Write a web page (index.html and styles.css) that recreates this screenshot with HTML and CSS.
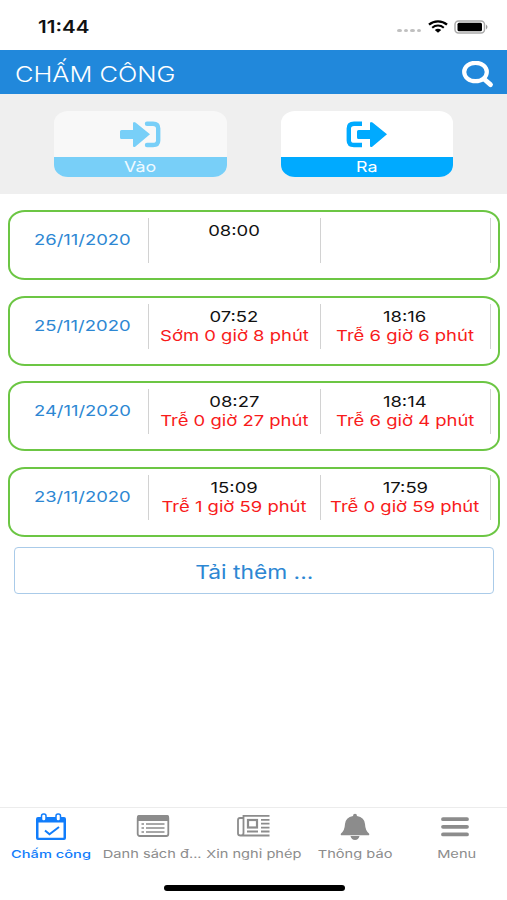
FILE: index.html
```html
<!DOCTYPE html>
<html lang="vi">
<head>
  <meta charset="UTF-8">
  <meta name="viewport" content="width=device-width, initial-scale=1.0">
  <title>Chấm công</title>
  <link rel="stylesheet" href="styles.css">
</head>
<body>

  <div class="status-bar">
    <span class="clock"><span class="wide">11:44</span></span>
    <div class="status-icons">
      <div class="dots"><i></i><i></i><i></i><i></i></div>
      <svg class="wifi" width="20" height="13" viewBox="0 0 20 13">
        <path d="M1 4.6C6 .2 14 .2 19 4.6" fill="none" stroke="#000" stroke-width="2.3"/>
        <path d="M4.2 7.7C7.5 4.8 12.5 4.8 15.8 7.7" fill="none" stroke="#000" stroke-width="2.1"/>
        <path d="M6.8 10Q10 7.4 13.2 10L10 12.8Z" fill="#000"/>
      </svg>
      <svg class="battery" width="35" height="14" viewBox="0 0 35 14">
        <rect x="1" y="1" width="29.5" height="12" rx="3.5" fill="#fff" stroke="#aaa" stroke-width="1.5"/>
        <rect x="3.5" y="2.7" width="24.5" height="8.6" rx="1.5" fill="#000"/>
        <path d="M32 4.5Q35 7 32 9.5Z" fill="#999"/>
      </svg>
    </div>
  </div>

  <header class="header">
    <h1><span class="wide">CHẤM CÔNG</span></h1>
    <svg width="32" height="27" viewBox="0 0 32 27" fill="none" stroke="#fff">
      <ellipse cx="13.5" cy="11" rx="11.3" ry="9.2" stroke-width="4.2"/>
      <path d="M22 18L28.5 23.6" stroke-width="4.8" stroke-linecap="round"/>
    </svg>
  </header>

  <div class="actions">
    <div class="action disabled">
      <div class="action-icon">
        <svg width="42" height="27" viewBox="0 0 42 27">
          <path d="M2.5 9H14V2.5Q14 0 16.5 1.5L31 13.3L16.500 25.5Q14 27 14 24.5V18H2.5Q1 18 1 16.5V10.5Q1 9 2.5 9Z" fill="currentColor"/>
          <path d="M28 2.8H34Q39.2 2.8 39.2 7.5V19.5Q39.2 24 34 24H28" fill="none" stroke="currentColor" stroke-width="4.4" stroke-linecap="round"/>
        </svg>
      </div>
      <div class="action-label"><span class="wide">Vào</span></div>
    </div>
    <div class="action">
      <div class="action-icon">
        <svg width="42" height="27" viewBox="0 0 42 27">
          <path d="M12.5 9H24V2.5Q24 0 26.5 1.5L41 13.3L26.5 25.5Q24 27 24 24.5V18H12.5Q11 18 11 16.5V10.5Q11 9 12.5 9Z" fill="currentColor"/>
          <path d="M16 2.8H8Q2.8 2.8 2.8 7.5V19.5Q2.8 24 8 24H16" fill="none" stroke="currentColor" stroke-width="4.4"/>
        </svg>
      </div>
      <div class="action-label"><span class="wide">Ra</span></div>
    </div>
  </div>

  <main class="list">
    <div class="card">
      <div class="date"><span class="wide">26/11/2020</span></div>
      <div class="time"><span class="wide">08:00</span></div>
      <div class="time"></div>
    </div>
    <div class="card">
      <div class="date"><span class="wide">25/11/2020</span></div>
      <div class="time"><span class="wide">07:52</span><span class="wide late">Sớm 0 giờ 8 phút</span></div>
      <div class="time"><span class="wide">18:16</span><span class="wide late">Trễ 6 giờ 6 phút</span></div>
    </div>
    <div class="card">
      <div class="date"><span class="wide">24/11/2020</span></div>
      <div class="time"><span class="wide">08:27</span><span class="wide late">Trễ 0 giờ 27 phút</span></div>
      <div class="time"><span class="wide">18:14</span><span class="wide late">Trễ 6 giờ 4 phút</span></div>
    </div>
    <div class="card">
      <div class="date"><span class="wide">23/11/2020</span></div>
      <div class="time"><span class="wide">15:09</span><span class="wide late">Trễ 1 giờ 59 phút</span></div>
      <div class="time"><span class="wide">17:59</span><span class="wide late">Trễ 0 giờ 59 phút</span></div>
    </div>
  </main>

  <button class="load-more" type="button"><span class="wide">Tải thêm ...</span></button>

  <nav class="tabs">
    <div class="tab active">
      <svg width="34" height="28" viewBox="0 0 34 28">
        <path d="M4 4H30Q32 4 32 6V25Q32 27 30 27H4Q2 27 2 25V6Q2 4 4 4ZM4.5 9.5V24.7H29.5V9.5Z" fill="currentColor" fill-rule="evenodd"/>
        <rect x="7.5" y="1" width="4.500" height="7" rx="2" fill="#fff" stroke="currentColor" stroke-width="1.5"/>
        <rect x="22" y="1" width="4.5" height="7" rx="2" fill="#fff" stroke="currentColor" stroke-width="1.5"/>
        <path d="M11 17.5L15.5 21.3L25 14" fill="none" stroke="currentColor" stroke-width="2"/>
      </svg>
      <span class="wide">Chấm công</span>
    </div>
    <div class="tab">
      <svg width="36" height="28" viewBox="0 0 36 28">
        <rect x="3.7" y="3" width="30.6" height="20" rx="2" fill="none" stroke="currentColor" stroke-width="1.8"/>
        <path d="M3 8V4Q3 2 5 2H33Q35 2 35 4V8Z" fill="currentColor"/>
        <path d="M7.5 11H10M7.500 15H10M7.5 19H10M12 11H30.5M12 15H30.5M12 19H30.5" stroke="currentColor" stroke-width="1.7"/>
      </svg>
      <span class="wide">Danh sách đ...</span>
    </div>
    <div class="tab">
      <svg width="38" height="28" viewBox="-3 0 38 28" fill="none" stroke="currentColor" stroke-width="1.8">
        <path d="M6 5H3Q1 5 1 7V20.5Q1 22.5 3.5 22.5H32.5M6.5 20V2.8H32.5M6.5 20Q6.500 22.5 4 22.5"/>
        <rect x="11" y="7" width="9" height="7.5" stroke-width="2.2"/>
        <path d="M10 18.5H21M24 6.8H32.5M24 10.7H32.5M24 14.6H32.5M24 18.5H32.5"/>
      </svg>
      <span class="wide">Xin nghỉ phép</span>
    </div>
    <div class="tab">
      <svg width="34" height="28" viewBox="0 0 34 28" fill="currentColor">
        <path d="M17 .8Q19 .8 19 3Q26.5 4.5 27 11Q27.3 17.5 31 20.5Q32 22.3 30 22.3H4Q2 22.3 3 20.5Q6.7 17.5 7 11Q7.500 4.5 15 3Q15 .8 17 .8Z"/>
        <path d="M12.5 23H21.5Q20.5 27 17 27Q13.5 27 12.5 23Z"/>
      </svg>
      <span class="wide">Thông báo</span>
    </div>
    <div class="tab">
      <svg width="34" height="28" viewBox="0 0 34 28" stroke="currentColor" stroke-width="3.8" stroke-linecap="round">
        <path d="M4 6.200H28M4 13.8H28M4 21.4H28"/>
      </svg>
      <span class="wide">Menu</span>
    </div>
  </nav>

  <div class="home-indicator"></div>

</body>
</html>
```
FILE: styles.css
```css
* {
  box-sizing: border-box;
}
body {
  margin: 0;
  height: 900px;
  display: flex;
  flex-direction: column;
  background-color: #fff;
  font-family: Inter, "Liberation Sans", sans-serif;
  color: #111;
  overflow: hidden;
}
/* extended letterforms */
.wide {
  display: inline-block;
  white-space: nowrap;
  transform: scaleX(1.23);
}
.status-bar {
  height: 50px;
  flex: none;
  display: flex;
  justify-content: space-between;
  padding: 3px 18px 0 38px;
  align-items: center;
}
.clock {
  font-size: 17px;
  font-weight: 600;
}
.clock .wide {
  transform: scaleX(1.21);
  transform-origin: left;
}
.status-icons {
  display: flex;
  align-items: center;
}
.dots {
  display: flex;
  gap: 2px;
  margin: 8px 7px 0 0;
}
.dots i {
  width: 4.5px;
  height: 3.5px;
  border-radius: 50%;
  background-color: #c0c0c0;
}
.wifi {
  margin-right: 6px;
}
.header {
  height: 44px;
  flex: none;
  display: flex;
  align-items: center;
  justify-content: space-between;
  padding: 4px 13px 0 15px;
  background-color: #2188db;
  color: #fff;
}
.header h1 {
  margin: 2px 0 0;
  font-size: 21px;
  line-height: 28px;
  font-weight: 300;
}
.header .wide {
  transform: scaleX(1.21);
  transform-origin: left;
}
.actions {
  height: 100px;
  flex: none;
  display: flex;
  gap: 54px;
  padding: 17px 54px 0;
  background-color: #efefef;
}
.action {
  width: 173px;
  height: 66px;
  border-radius: 14px / 12px;
  overflow: hidden;
  background-color: #fff;
  color: #00aaff;
}
.action-icon {
  height: 46px;
  display: flex;
  align-items: center;
  justify-content: center;
}
.action-label {
  height: 20px;
  line-height: 20px;
  text-align: center;
  font-size: 14.5px;
  color: #fff;
  background-color: #00aaff;
}
.disabled {
  background-color: #f8f8f8;
  color: #78cff8;
}
.disabled .action-label {
  background-color: #78cff8;
  color: #f0faff;
}
.list {
  display: flex;
  flex-direction: column;
  gap: 15.7px;
  padding: 16px 7px 0 8px;
}
.card {
  height: 70px;
  display: grid;
  grid-template-columns: 140px 172px 170px;
  padding-top: 6px;
  border: 2px solid #6cc644;
  border-radius: 17px / 14px;
  font-size: 15px;
}
.date,
.time {
  height: 45px;
  margin-left: -2px;
  margin-right: 1px;
  border-right: 1px solid #d2d2d2;
  text-align: center;
}
.date {
  padding: 12px 0 0 8px;
  line-height: 20px;
  color: #2d87d3;
}
.time {
  display: flex;
  flex-direction: column;
  align-items: center;
  padding-top: 3px;
  line-height: 19px;
}
.late {
  color: #f81b1b;
}
.load-more {
  height: 47px;
  flex: none;
  margin: 10px 13px 0 14px;
  padding: 3px 0 0;
  border: 1px solid #aacbe9;
  border-radius: 4px;
  background-color: #fff;
  font-family: inherit;
  font-size: 19px;
  color: #2d87d3;
}
.load-more .wide {
  transform: scaleX(1.2);
}
.tabs {
  flex: none;
  height: 78px;
  margin-top: auto;
  display: grid;
  grid-template-columns: repeat(5, 1fr);
  border-top: 1px solid #ececec;
  color: #8c8c8c;
}
.tab {
  display: flex;
  flex-direction: column;
  align-items: center;
  padding-top: 5px;
  font-size: 11px;
  line-height: 18px;
  gap: 4px;
}
.tab .wide {
  transform: scaleX(1.33);
}
.active {
  color: #117dfb;
  font-weight: 500;
}
.home-indicator {
  flex: none;
  width: 181px;
  height: 6px;
  margin: 0 auto 9px 164px;
  border-radius: 3px;
  background-color: #000;
}
```
